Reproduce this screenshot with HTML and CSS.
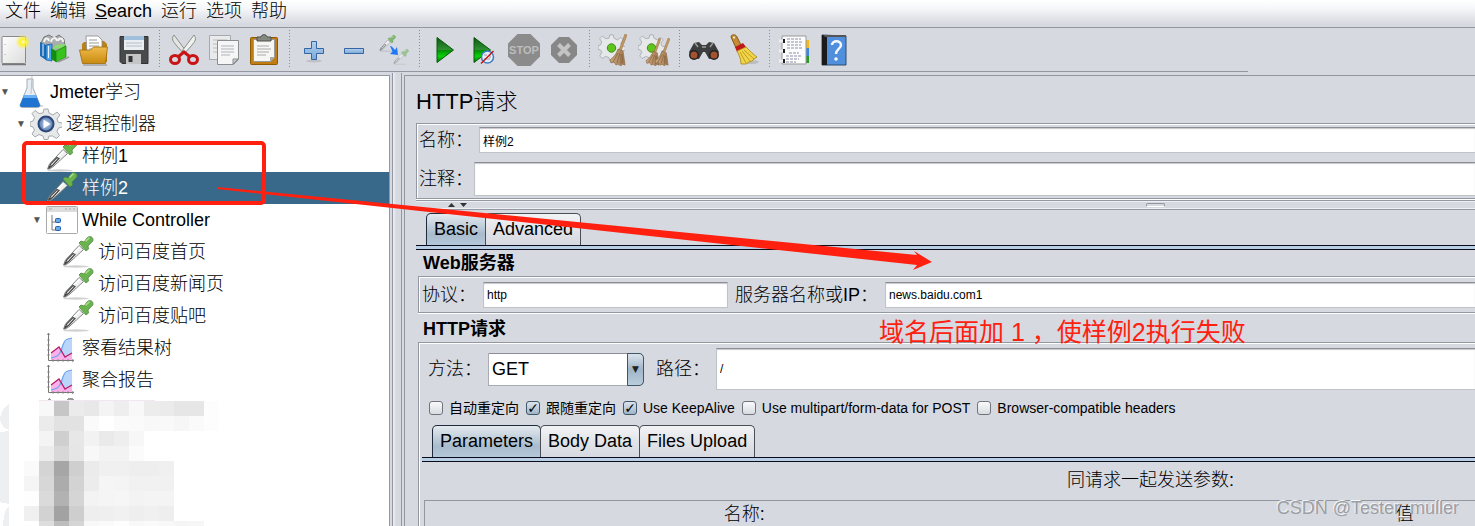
FILE: index.html
```
<!DOCTYPE html>
<html lang="zh-CN">
<head>
    <meta charset="UTF-8">
    <meta name="viewport" content="width=device-width, initial-scale=1.0">
    <title>Apache JMeter</title>
    <link rel="stylesheet" href="styles.css">
</head>
<body>
    <svg class="defs" aria-hidden="true">
        <defs>
            <linearGradient id="gPaper" x1="0" y1="0" x2="1" y2="1"><stop offset="0" stop-color="#fff"/><stop offset="1" stop-color="#dcdcdc"/></linearGradient>
            <radialGradient id="gSun"><stop offset="0" stop-color="#fffde0"/><stop offset=".35" stop-color="#fff22a"/><stop offset="1" stop-color="#fff22a" stop-opacity="0"/></radialGradient>
            <linearGradient id="gFolder" x1="0" y1="0" x2="0" y2="1"><stop offset="0" stop-color="#f0bc4c"/><stop offset="1" stop-color="#c98a10"/></linearGradient>
            <linearGradient id="gPlay" x1="0" y1="0" x2="0" y2="1"><stop offset="0" stop-color="#0b5a12"/><stop offset=".48" stop-color="#2f8f32"/><stop offset=".5" stop-color="#058a05"/><stop offset=".75" stop-color="#0bd00b"/><stop offset="1" stop-color="#047004"/></linearGradient>
            <linearGradient id="gBlue" x1="0" y1="0" x2="0" y2="1"><stop offset="0" stop-color="#b4d0ee"/><stop offset="1" stop-color="#7ba9d8"/></linearGradient>
            <linearGradient id="gBroom" x1="0" y1="0" x2="1" y2="0"><stop offset="0" stop-color="#c9a47c"/><stop offset="1" stop-color="#a57c52"/></linearGradient>
            <radialGradient id="gOrb"><stop offset="0" stop-color="#c4d6ee"/><stop offset="1" stop-color="#5577ad"/></radialGradient>
        </defs>
        <symbol id="dropper" viewBox="0 0 32 32">
            <ellipse cx="14" cy="30.500" rx="13" ry="1.200" fill="#999" opacity=".45"/>
            <path d="M1.500 29l2-5L17 9.500l4.500 4L8 26l-4.500 3z" fill="#eef0f0" stroke="#777" stroke-width=".9"/>
            <path d="M2.500 28.500l2.500-5 6-6 2 1L7 25z" fill="#e4e8e8" stroke="#444" stroke-width="1.200"/>
            <path d="M12 17l6-6" stroke="#fff" stroke-width="1.500"/>
            <path d="M17 7l2-2 3 1 3.500-4.500C27.500-.5 32 1 30.800 5L26 10l.5 3-2.500 2z" fill="#6cb350" stroke="#4a8a38" stroke-width=".8"/>
            <path d="M24 5l3-3" stroke="#a8dc92" stroke-width="1.600" stroke-linecap="round"/>
        </symbol>
        <symbol id="chart" viewBox="0 0 32 32">
            <path d="M13 20l5-10 4-2 4-1v14l-8 5z" fill="#b9d6fa"/>
            <path d="M5 21l8-6 6 9 2 1 5-4v8H5z" fill="#fbb0ea"/>
            <path d="M5 26c5-1 8-2 10-7s2-9 5-11 4-1 6-2" fill="none" stroke="#6aa6f0" stroke-width="1.200"/>
            <path d="M5 21l8-6 6 10 7-4" fill="none" stroke="#b0206a" stroke-width="1.300"/>
            <path d="M2.500 1v27.500H28" fill="none" stroke="#777"/>
            <path d="M1 3l1.500-2L4 3M26 27l2 1.500-2 1.500M1 8h3M1 13h3M1 18h3M1 23h3M7 27v3M12 27v3M17 27v3M22 27v3" fill="none" stroke="#888" stroke-width=".8"/>
        </symbol>
        <symbol id="cog" viewBox="-16 -16 32 32">
            <path d="M-3-11l1-4h4l1 4 4 2 4-3 3 3-3 4 1.500 3.500 4 .5v4l-4 1-1.500 3.500 2.500 4-3 3-4-2.500L3 12l-1 3.500h-4L-3 12l-4-1.500-4 2.500-3-3 2.500-4L-13 3l-3-1v-4l3-1 1.500-3.500-2.500-4 3-3 4 3z" fill="#e6e8ea" stroke="#a6aaae"/>
        </symbol>
        <symbol id="broom" viewBox="0 0 18 32">
            <path d="M16 0l2 1-6 16-2-1z" fill="#c59a63" stroke="#8d673a" stroke-width=".5"/>
            <path d="M9 15l5 2 2 14-3-1-1 2-3-2-2 1-2-3-3 1-1-3c4-3 7-7 8-11z" fill="url(#gBroom)" stroke="#8a6742" stroke-width=".7"/>
            <path d="M9 19L4 28M11 19l-3 10M12 20l0 10M13 20l1 9" stroke="#76543a" stroke-width=".6" fill="none"/>
        </symbol>
    </svg>

    <nav class="menubar">
        <button>文件</button>
        <button>编辑</button>
        <button><u>S</u>earch</button>
        <button>运行</button>
        <button>选项</button>
        <button>帮助</button>
    </nav>

    <div class="toolbar">
        <button aria-label="New">
            <svg viewBox="0 0 32 32"><rect x="4" y="2.500" width="23.500" height="27" rx="1" fill="url(#gPaper)" stroke="#888a85"/><path d="M4 30.500h24" stroke="#777" stroke-width="1.500"/><path d="M7 10v1m0 9v1" stroke="#aaa"/><circle cx="25" cy="8" r="7.500" fill="url(#gSun)"/></svg>
        </button>
        <button aria-label="Templates">
            <svg viewBox="0 0 32 32"><path d="M3 9l3-6 5-2 5 3 5-3 5 4 1 7-10 9-13-7z" fill="#a9adb0" stroke="#777"/><path d="M6 8c1-4 4-5 5-1M13 8c1-5 5-5 6-1M20 7c1-4 5-3 5 1" fill="none" stroke="#f3f3f3" stroke-width="2"/><path d="M2 8l6 3v15l-6-4z" fill="#1b6db8"/><path d="M8 11l6-1v17l-6-1z" fill="#49a8ee" stroke="#0e5290" stroke-width=".7"/><path d="M14 15l4-4 10-1-3 4z" fill="#85df6a"/><path d="M13 14l5 3v11l-5-3z" fill="#148d17"/><path d="M18 17l10-5v11l-10 5z" fill="#37c21d" stroke="#14820f" stroke-width=".7"/><path d="M5 10v12M10.500 12v12" stroke="#e7f4ff"/><path d="M20 28l11-5" stroke="#999" stroke-width="1.500"/></svg>
        </button>
        <button aria-label="Open">
            <svg viewBox="0 0 32 32"><path d="M4 10l2-2h5v-1h15l3 3v18H4z" fill="#b9821a"/><path d="M8 2h12l4 4v16H9z" fill="#fff" stroke="#888" stroke-width=".8"/><path d="M11 6h8m-8 3h10m-10 3h10m-10 3h10" stroke="#999"/><path d="M1.500 16h11l3-3h14l-2 16.500h-23z" fill="url(#gFolder)" stroke="#9e6c0a" stroke-width=".8"/><path d="M5 31h24" stroke="#888"/></svg>
        </button>
        <button aria-label="Save">
            <svg viewBox="0 0 32 32"><path d="M2 2.500h28v27H4l-2-2z" fill="#484a4c" stroke="#303234"/><path d="M6 2h20v14H6z" fill="#e9eef3"/><path d="M6 2h20v4H6z" fill="#9fbfdd"/><path d="M8 9h16m-16 3h16" stroke="#b8bfc6"/><path d="M8 20h15v10H8z" fill="#c3c5c7"/><path d="M10.500 22h4v6h-4z" fill="#333"/></svg>
        </button>
        <span class="sep"></span>
        <button aria-label="Cut">
            <svg viewBox="0 0 32 32"><path d="M6 1c-3 4-1 6 2 10l8 9 2-3z" fill="#e3e5e3" stroke="#8b8e88"/><path d="M26 1c3 4 1 6-2 10l-8 9-2-3z" fill="#f1f2f0" stroke="#8b8e88"/><g fill="none" stroke="#c81414" stroke-width="3"><ellipse cx="7" cy="25.500" rx="4.500" ry="4"/><ellipse cx="25" cy="25.500" rx="4.500" ry="4"/><path d="M10.500 22.500l5.500-4.500 5.500 4.500"/></g></svg>
        </button>
        <button aria-label="Copy">
            <svg viewBox="0 0 32 32"><path d="M1.500 1.500h21v24h-21z" fill="#e9eaeb" stroke="#a7a9ab"/><path d="M5 6h14M5 10h4M5 14h4M5 18h4" stroke="#bbb"/><path d="M9.500 6.500h21v19l-5 5h-16z" fill="#f6f6f6" stroke="#8b8d8f"/><path d="M30 25h-5v5z" fill="#ccc" stroke="#8b8d8f"/><path d="M13 12h13m-13 3h13m-13 3h13m-13 3h9" stroke="#b1b3b5"/></svg>
        </button>
        <button aria-label="Paste">
            <svg viewBox="0 0 32 32"><rect x="2.500" y="3.500" width="27" height="27" rx="1" fill="#c17d11" stroke="#8f5902"/><path d="M5.500 5.500h21v18l-4 4h-17z" fill="#f6f6f4" stroke="#999"/><path d="M9 12h12m-12 3h14m-14 3h12m-12 3h9" stroke="#aaa"/><path d="M27 23h-5v5z" fill="#aaa"/><path d="M9 3h4c0-3 6-3 6 0h4v4H9z" fill="#85887f" stroke="#4d504a"/></svg>
        </button>
        <span class="sep"></span>
        <button aria-label="Expand all">
            <svg viewBox="0 0 32 32"><ellipse cx="16" cy="27" rx="8" ry="1.500" fill="#aaa" opacity=".5"/><path d="M13.500 7.500h5v7h7v5h-7v6h-5v-6H6.500v-5h7z" fill="url(#gBlue)" stroke="#3465a4"/></svg>
        </button>
        <button aria-label="Collapse all">
            <svg viewBox="0 0 32 32"><path d="M6.500 14.500h19v5h-19z" fill="url(#gBlue)" stroke="#3465a4"/></svg>
        </button>
        <button aria-label="Toggle">
            <svg viewBox="0 0 32 32"><use href="#dropper" x="1" y="1" width="17" height="17" opacity=".8"/><use href="#dropper" x="15" y="15" width="16" height="16" opacity=".55"/><path d="M12 12c2 0 3 2 5 4l2-3 1 8-8-1 2.500-2.500z" fill="#1f79f2"/></svg>
        </button>
        <span class="sep"></span>
        <button aria-label="Start">
            <svg viewBox="0 0 32 32"><path d="M9 3.500L25.500 16 9 28.500z" fill="url(#gPlay)" stroke="#075a0a"/></svg>
        </button>
        <button aria-label="Start no pauses">
            <svg viewBox="0 0 32 32"><path d="M6 3.500L22.500 16 6 28.500z" fill="url(#gPlay)" stroke="#075a0a"/><circle cx="19.500" cy="23" r="6" fill="#e8eef6" stroke="#3c7fc4" stroke-width="1.500"/><path d="M16 21h3m-3 4h6m0-5v4" stroke="#99a"/><path d="M13 29.500L25.500 17" stroke="#d01010" stroke-width="1.500"/></svg>
        </button>
        <button aria-label="Stop" disabled>
            <svg viewBox="0 0 32 32"><path d="M9.500 0h13L32 9.500v13L22.500 32h-13L0 22.500v-13z" fill="#8b8b8b"/><text x="16" y="20" class="stop-text">STOP</text></svg>
        </button>
        <button aria-label="Shutdown" disabled>
            <svg viewBox="0 0 32 32"><path d="M11 3h10l8 8v10l-8 8H11l-8-8V11z" fill="#878787"/><path d="M10.500 10.500l11 11m0-11l-11 11" stroke="#c4c4c4" stroke-width="4"/></svg>
        </button>
        <span class="sep"></span>
        <button aria-label="Clear">
            <svg viewBox="0 0 32 32"><use href="#cog" x="0" y="0" width="27" height="27"/><circle cx="13.500" cy="14" r="4.200" fill="#5ec51c" stroke="#3f8f12"/><use href="#broom" x="11" y="0" width="18" height="32"/></svg>
        </button>
        <button aria-label="Clear all">
            <svg viewBox="0 0 32 32"><use href="#cog" x="0" y="0" width="27" height="27"/><circle cx="13.500" cy="14" r="4.200" fill="#5ec51c" stroke="#3f8f12"/><use href="#broom" x="7" y="4" width="16" height="28"/><use href="#broom" x="16" y="4" width="16" height="28"/></svg>
        </button>
        <span class="sep"></span>
        <button aria-label="Search">
            <svg viewBox="0 0 32 32"><path d="M1 18l5-9 5-1 3 3h4l3-3 5 1 5 9-4 6-6 1-4-7h-2l-4 7-6-1z" fill="#3c3d3f"/><path d="M7 9l3 4M25 9l-3 4M14 13h4" stroke="#999" stroke-width="1.500"/><circle cx="6" cy="21" r="5" fill="#222"/><circle cx="26" cy="21" r="5" fill="#222"/><circle cx="6" cy="21" r="3.500" fill="#a35330"/><circle cx="26" cy="21" r="3.500" fill="#a35330"/></svg>
        </button>
        <button aria-label="Reset search">
            <svg viewBox="0 0 32 32"><ellipse cx="23" cy="28" rx="8" ry="2" fill="#aaa" opacity=".6"/><path d="M3 3c0-3 5-3 6 0l4 8-5 3z" fill="#c58b35" stroke="#855a18"/><circle cx="6" cy="3.500" r="1" fill="#fff"/><path d="M7 13l8-4 3 4-9 5z" fill="#c01818"/><path d="M9 17l9-4c4 4 7 7 11 10l-3 2-2 2-3 1-3 2-5 0c0-5-2-9-4-13z" fill="#f0d44a" stroke="#a8850e" stroke-width=".8"/><path d="M12 18l6 11M14 17l8 10M16 16l10 9" stroke="#c19f1f"/></svg>
        </button>
        <span class="sep"></span>
        <button aria-label="Function helper">
            <svg viewBox="0 0 32 32"><path d="M27 6h4v8h-4z" fill="#f5b71c"/><path d="M27 14h4v8h-4z" fill="#3a86e6"/><path d="M27 22h4v7h-4z" fill="#2a9a26"/><path d="M4 2h24v28H4z" fill="#fcfcfc" stroke="#999"/><path d="M9 5h14m-14 3h16m-16 3h14m-14 3h15m-13 5h10m-13 3h15m-15 3h13m-13 3h10" stroke="#8a8fa8" stroke-dasharray="3 1"/><path d="M1 7h5m-5 10h5m-5 10h5" stroke="#eee" stroke-width="3"/><path d="M6 5v4m0 6v4m0 6v4" stroke="#222" stroke-width="2"/></svg>
        </button>
        <button aria-label="Help">
            <svg viewBox="0 0 32 32"><path d="M4 1l24 1v29H4z" fill="#4f8fdb" stroke="#2c4a6e"/><path d="M4 1h5v30H4z" fill="#1a1a1a"/><path d="M5 1h23v2H7z" fill="#555"/><path d="M14 11c0-5 9-5 9 0 0 4-5 4-5 9" fill="none" stroke="#f4f8fd" stroke-width="2.500"/><circle cx="18" cy="25" r="1.800" fill="#f4f8fd"/></svg>
        </button>
    </div>

    <main class="main">
        <aside class="sidebar">
            <ul class="tree">
                <li class="level0"><span class="arrow">▼</span>
                    <svg class="icon" viewBox="0 0 32 32"><ellipse cx="18" cy="30" rx="12" ry="1.500" fill="#aaa" opacity=".5"/><path d="M13 3h6v9l7 17c0 2-1 2.500-3 2.500H9c-2 0-3-.5-3-2.500l7-17z" fill="#e8eef3" stroke="#a5adb5"/><path d="M10 19h12l4 10c0 2-1 2-3 2H9c-2 0-3 0-3-2z" fill="#1f74d2"/><path d="M10 19h12l1 3H9z" fill="#69b0f5"/><path d="M18 0l-1 18" stroke="#bbc3ca"/></svg>
                    <span>Jmeter学习</span></li>
                <li class="level1"><span class="arrow">▼</span>
                    <svg class="icon" viewBox="0 0 32 32"><use href="#cog" x="0" y="0" width="32" height="32"/><circle cx="16" cy="16" r="7.500" fill="url(#gOrb)" stroke="#2a4778" stroke-width="2"/><path d="M13.500 11.500l7 4.500-7 4.500z" fill="#fff"/></svg>
                    <span>逻辑控制器</span></li>
                <li class="level2"><svg class="icon"><use href="#dropper"/></svg><span>样例1</span></li>
                <li class="level2 selected"><svg class="icon"><use href="#dropper"/></svg><span>样例2</span></li>
                <li class="level2"><span class="arrow">▼</span>
                    <svg class="icon" viewBox="0 0 32 32"><rect x=".5" y="2.500" width="31" height="27" rx="1" fill="#fff" stroke="#aaa"/><path d="M1 3h30v5H1z" fill="#ddd"/><path d="M3 5h3m13 0h2m2 0h2m2 0h2" stroke="#aaa"/><path d="M6 11v15h4m-4-8h4" fill="none" stroke="#777"/><rect x="9.500" y="14.500" width="5" height="4" rx="1" fill="#6fa9e6" stroke="#1c5ea8"/><rect x="9.500" y="22.500" width="5" height="4" rx="1" fill="#6fa9e6" stroke="#1c5ea8"/></svg>
                    <span>While Controller</span></li>
                <li class="level3"><svg class="icon"><use href="#dropper"/></svg><span>访问百度首页</span></li>
                <li class="level3"><svg class="icon"><use href="#dropper"/></svg><span>访问百度新闻页</span></li>
                <li class="level3"><svg class="icon"><use href="#dropper"/></svg><span>访问百度贴吧</span></li>
                <li class="level2"><svg class="icon"><use href="#chart"/></svg><span>察看结果树</span></li>
                <li class="level2"><svg class="icon"><use href="#chart"/></svg><span>聚合报告</span></li>
            </ul>
            <svg class="mosaic" id="mosaic" viewBox="0 0 230 140" width="230" height="140">
                <path d="M9 8Q0 14 0 24q2 8 9 10zM0 36l9-1v73l-9-2zM9 110q-7 6-6 30h6z" fill="#edeff1"/>
                <path d="M39 4h116" stroke="#f4e6f0"/>
                <path d="M47 4l2-2 2 2zM66 4q4-4 9 0z" fill="#999"/>
            </svg>
        </aside>

        <div class="divider"></div>

        <section class="panel">
            <h1>HTTP请求</h1>
            <div class="group naming">
                <div class="field">
                    <label for="name">名称：</label>
                    <input type="text" id="name" value="样例2">
                </div>
                <div class="field comment">
                    <label for="comment">注释：</label>
                    <input type="text" id="comment">
                </div>
            </div>

            <div class="split-bar">
                <svg class="split-arrows" viewBox="0 0 20 6" width="20" height="6"><path d="M0 5l3.500-4L7 5zM12 1h7l-3.500 4z" fill="#333"/></svg>
                <span class="grip"></span>
            </div>

            <div class="tabs" role="tablist">
                <button class="tab active" role="tab">Basic</button>
                <button class="tab" role="tab">Advanced</button>
            </div>
            <div class="tab-strip"></div>

            <h2 class="web-title">Web服务器</h2>
            <div class="group server">
                <label for="protocol">协议：</label>
                <input type="text" id="protocol" class="protocol" value="http">
                <label for="server">服务器名称或IP：</label>
                <input type="text" id="server" class="grow" value="news.baidu.com1">
            </div>

            <h2 class="http-title">HTTP请求</h2>
            <div class="group request">
                <div class="method-row">
                    <label for="method">方法：</label>
                    <div class="combo">
                        <select id="method"><option>GET</option><option>POST</option></select>
                        <span class="combo-arrow">▼</span>
                    </div>
                    <label for="path" class="path-label">路径：</label>
                    <input type="text" id="path" class="grow path" value="/">
                </div>
                <div class="checks">
                    <label><input type="checkbox">自动重定向</label>
                    <label><input type="checkbox" checked>跟随重定向</label>
                    <label><input type="checkbox" checked>Use KeepAlive</label>
                    <label><input type="checkbox">Use multipart/form-data for POST</label>
                    <label><input type="checkbox">Browser-compatible headers</label>
                </div>
                <div class="params">
                    <div class="tabs" role="tablist">
                        <button class="tab active" role="tab">Parameters</button>
                        <button class="tab" role="tab">Body Data</button>
                        <button class="tab" role="tab">Files Upload</button>
                    </div>
                    <div class="tab-strip"></div>
                    <table>
                        <caption>同请求一起发送参数:</caption>
                        <thead>
                            <tr><th class="col-name">名称:</th><th class="col-value">值</th><th></th></tr>
                        </thead>
                    </table>
                </div>
            </div>
        </section>
    </main>

    <div class="mark-box"></div>
    <svg class="mark-arrow" viewBox="0 0 720 90" width="720" height="90"><path d="M2 7l700 68-3-4 18 11-19 8 4-5L2 9z" fill="#ff2010"/></svg>
    <div class="mark-text">域名后面加 1 ，使样例2执行失败</div>
    <div class="watermark">CSDN @Tester_muller</div>

    <script>
        // greys of the blurred block, one list per row, first value is the start column
        const rows = [
            [1, 'f8', 'c6', 'eb', 'e8', 'f4', 'ee', 'f8', 'ec', 'eb', 'e6', 'e6', 'fd'],
            [1, 'eb', 'e2', 'e2', 'fa', 'ff', 'fb', 'fa', 'f8', 'f9', 'f6', 'fa', 'fd'],
            [1, 'f4', 'cf', 'e7', 'f2', 'ea', 'ee', 'f7'],
            [1, 'ec', 'd8', 'e6', 'f8', 'f3', 'f3', 'fb'],
            [0, 'fa', 'd4', 'a6', 'cf', 'eb', 'f0', 'f0', 'ee', 'ee', 'f0'],
            [0, 'f5', 'd7', 'ac', 'd3', 'ec', 'f5', 'f4', 'f1', 'f1', 'f1'],
            [0, 'fe', 'da', 'b2', 'd5', 'f3', 'f5', 'f6', 'f3', 'f4', 'f4'],
            [0, 'f0', 'd2', 'a2', 'ce', 'ee', 'ef', 'f1', 'ee', 'f0', 'ee'],
            [1, 'dd', 'bd', 'd5', 'f8', 'fa', 'fd', 'f8', 'fa', 'f8', 'f5', 'f6']
        ];
        const mosaic = document.getElementById('mosaic');
        rows.forEach((row, y) => {
            row.slice(1).forEach((grey, x) => {
                const rect = document.createElementNS('http://www.w3.org/2000/svg', 'rect');
                rect.setAttribute('x', 24 + (row[0] + x) * 15);
                rect.setAttribute('y', 5 + y * 15);
                rect.setAttribute('width', 15);
                rect.setAttribute('height', 15);
                rect.setAttribute('fill', '#' + grey + grey + grey);
                mosaic.appendChild(rect);
            });
        });
    </script>
</body>
</html>
```

FILE: styles.css
```
* {
    box-sizing: border-box;
}

body {
    display: flex;
    flex-direction: column;
    height: 100vh;
    margin: 0;
    overflow: hidden;
    position: relative;
    background-color: #d6d9e0;
    color: #000;
    font-family: "Liberation Sans", "Noto Sans CJK SC", sans-serif;
    font-size: 18px;
    line-height: 20px;
}

button, input, select {
    font-family: inherit;
    color: inherit;
}

label, h1, h2, th, caption, li, .menubar button {
    white-space: nowrap;
}

.defs {
    position: absolute;
    width: 0;
    height: 0;
}

.menubar {
    display: flex;
    flex-shrink: 0;
    gap: 9px;
    height: 28px;
    padding-left: 5px;
    background: linear-gradient(#fff, #f6f7f9 30%, #d6d9e0 90%);
    border-bottom: 1px solid #9297a1;
}

.menubar button {
    padding: 0;
    border: none;
    background: none;
    font-size: 18px;
    font-weight: 300;
    line-height: 22px;
    height: 22px;
}

.toolbar {
    display: flex;
    flex-shrink: 0;
    width: 85%;
    height: 44px;
    margin-left: -6px;
    border-bottom: 1px solid #9297a1;
}

.toolbar button {
    flex: 0 0 40px;
    height: 44px;
    padding: 0;
    border: none;
    background: none;
}

.toolbar svg {
    display: block;
    width: 32px;
    height: 32px;
    margin: 0 auto;
}

.stop-text {
    font-size: 11px;
    font-weight: bold;
    text-anchor: middle;
    fill: #bdbdbd;
}

.sep {
    flex: 0 0 10px;
    margin: 2px 0;
    background: linear-gradient(#888c96 1px, transparent 1px) center / 1px 3px repeat-y;
}

.main {
    display: flex;
    flex: 1;
    min-height: 0;
}

.sidebar {
    flex: 0 0 390px;
    margin-top: 3px;
    background-color: #fff;
    border-top: 1px solid #9297a1;
    border-right: 1px solid #9297a1;
    overflow: hidden;
}

.tree {
    margin: 0;
    padding: 0;
    list-style: none;
    font-weight: 300;
}

.tree li {
    display: flex;
    align-items: center;
    gap: 4px;
    height: 32px;
}

.tree .level0 { padding-left: 14px; }
.tree .level1 { padding-left: 30px; }
.tree .level2 { padding-left: 46px; }
.tree .level3 { padding-left: 62px; }

.tree .selected {
    background-color: #39698a;
    color: #fff;
}

.arrow {
    width: 14px;
    margin-left: -18px;
    padding-left: 4px;
    font-family: "DejaVu Sans", sans-serif;
    font-size: 10px;
    text-align: center;
    color: #555;
}

.icon {
    flex: 0 0 32px;
    height: 32px;
}

.mosaic {
    display: block;
    shape-rendering: crispEdges;
}

.divider {
    flex: 0 0 10px;
    margin: 1px 2px 0 2px;
    border-left: 1px solid #9297a1;
    border-right: 1px solid #9297a1;
    background: linear-gradient(90deg, #eef0f3, #d6d9e0 40%);
}

.panel {
    flex: 1;
    min-width: 0;
    margin-top: 3px;
    padding-left: 11px;
    border-top: 1px solid #9297a1;
    border-left: 1px solid #9297a1;
    overflow: hidden;
}

h1 {
    margin: 0;
    padding-top: 5px;
    font-size: 22px;
    font-weight: 300;
    line-height: 42px;
}

h2 {
    margin: 0;
    padding-left: 7px;
    font-size: 18px;
    line-height: 26px;
}

.http-title {
    padding-top: 3px;
}

label {
    font-weight: 300;
}

.group {
    border: 1px solid #9297a1;
    border-right: none;
    box-shadow: inset 1px 1px #fff, 0 1px #fff;
}

input[type="text"] {
    height: 26px;
    min-width: 0;
    padding: 0 3px;
    border: 1px solid #c0c3c8;
    border-top-color: #8b8e94;
    background-color: #fff;
    box-shadow: inset 0 1px 1px #c5c7ca;
    font-size: 12px;
    outline: none;
}

.naming {
    display: flex;
    flex-direction: column;
    gap: 9px;
    padding: 3px 0 2px 2px;
}

.field {
    display: flex;
    align-items: center;
    gap: 6px;
}

.field input {
    flex: 1;
    border-right: none;
}

.comment {
    gap: 1px;
}

.comment input {
    height: 34px;
}

.split-bar {
    display: flex;
    align-items: center;
    height: 10px;
    margin-top: 1px;
    padding-left: 32px;
    border-top: 1px solid #9297a1;
    border-bottom: 1px solid #9297a1;
    box-shadow: inset 0 1px #eef0f3, inset 0 -1px #eef0f3;
}

.grip {
    width: 19px;
    height: 4px;
    margin-left: 66%;
    border: 1px solid #9297a1;
    border-bottom-color: #fff;
    border-radius: 2px;
}

.tabs {
    display: flex;
    height: 32px;
    margin-top: 3px;
    padding-left: 10px;
}

.tab {
    padding: 0 7px;
    border: 1px solid #4a4e57;
    border-bottom: none;
    border-radius: 5px 5px 0 0;
    background: linear-gradient(#f2f3f5, #e2e4e8 50%, #d6d9e0);
    font-size: 18px;
}

.tab + .tab {
    margin-left: -1px;
}

.tab.active {
    border-color: #1e2b3c;
    background: linear-gradient(#e4eaef, #a9bccd 65%, #b4c8da);
}

.tab-strip {
    height: 5px;
    border-top: 1px solid #0a0c1c;
    border-bottom: 1px solid #0a0c1c;
    background-color: #b8cfe5;
}

.server, .request {
    margin-left: 2px;
}

.server {
    display: flex;
    align-items: center;
    gap: 7px;
    padding: 5px 0 4px 3px;
}

.protocol {
    flex: 0 0 245px;
}

.grow {
    flex: 1;
}

input.grow {
    border-right: none;
}

.request {
    border-bottom: none;
    box-shadow: inset 1px 1px #fff;
    padding: 5px 0 0 3px;
}

.method-row {
    display: flex;
    align-items: center;
    gap: 6px;
    padding-left: 6px;
}

input.path {
    height: 42px;
}

.combo {
    position: relative;
    flex: 0 0 156px;
}

.combo select {
    appearance: none;
    display: block;
    width: 100%;
    height: 33px;
    padding: 0 3px;
    border: 1px solid #a9acb2;
    border-top-color: #8b8e94;
    border-radius: 0 5px 5px 0;
    background-color: #fff;
    font-size: 18px;
}

.combo-arrow {
    position: absolute;
    top: 0;
    right: 0;
    width: 17px;
    height: 33px;
    border: 1px solid #3f5568;
    border-radius: 0 5px 5px 0;
    background: linear-gradient(#dbe4ec, #9fb5c8 50%, #b9cddd);
    color: #222;
    font-family: "DejaVu Sans", sans-serif;
    font-size: 9px;
    line-height: 30px;
    text-align: center;
    pointer-events: none;
}

.path-label {
    margin-left: 6px;
}

.checks {
    display: flex;
    align-items: center;
    gap: 7px;
    height: 35px;
    padding-left: 7px;
}

.checks label {
    display: flex;
    align-items: center;
    gap: 6px;
    font-size: 14px;
    font-weight: 400;
}

input[type="checkbox"] {
    appearance: none;
    display: grid;
    place-items: center;
    width: 14px;
    height: 14px;
    margin: 0;
    border: 1px solid #70747d;
    border-radius: 3px;
    background: linear-gradient(#fafafb, #d9dce1);
}

input[type="checkbox"]:checked {
    border-color: #3f5568;
    background: linear-gradient(#dbe4ec, #9fb5c8);
}

input[type="checkbox"]:checked::before {
    content: "✓";
    font-family: "DejaVu Sans", sans-serif;
    font-size: 14px;
    font-weight: bold;
    line-height: 12px;
}

.params .tabs {
    margin-top: 0;
}

.params {
    overflow: hidden;
}

table {
    width: 138%;
    margin-left: 2px;
    table-layout: fixed;
    border-collapse: collapse;
    border: 1px solid #9297a1;
}

caption {
    height: 38px;
    line-height: 36px;
    font-weight: 300;
}

th {
    height: 26px;
    padding: 0;
    font-weight: 300;
}

.col-name {
    width: 44%;
}

.col-value {
    width: 47%;
}

/* annotations drawn over the window */
.mark-box {
    position: absolute;
    left: 22px;
    top: 141px;
    width: 244px;
    height: 64px;
    border: 4px solid #ff2010;
    border-radius: 5px;
}

.mark-arrow {
    position: absolute;
    left: 215px;
    top: 180px;
    pointer-events: none;
}

.mark-text {
    position: absolute;
    left: 879px;
    top: 314px;
    font-size: 25px;
    line-height: 36px;
    white-space: nowrap;
    color: #ff2010;
}

.watermark {
    position: absolute;
    right: 16px;
    bottom: 6px;
    font-size: 18px;
    line-height: 24px;
    color: #9c9ea3;
    text-shadow: -1px -1px #f4f5f7;
}
```
